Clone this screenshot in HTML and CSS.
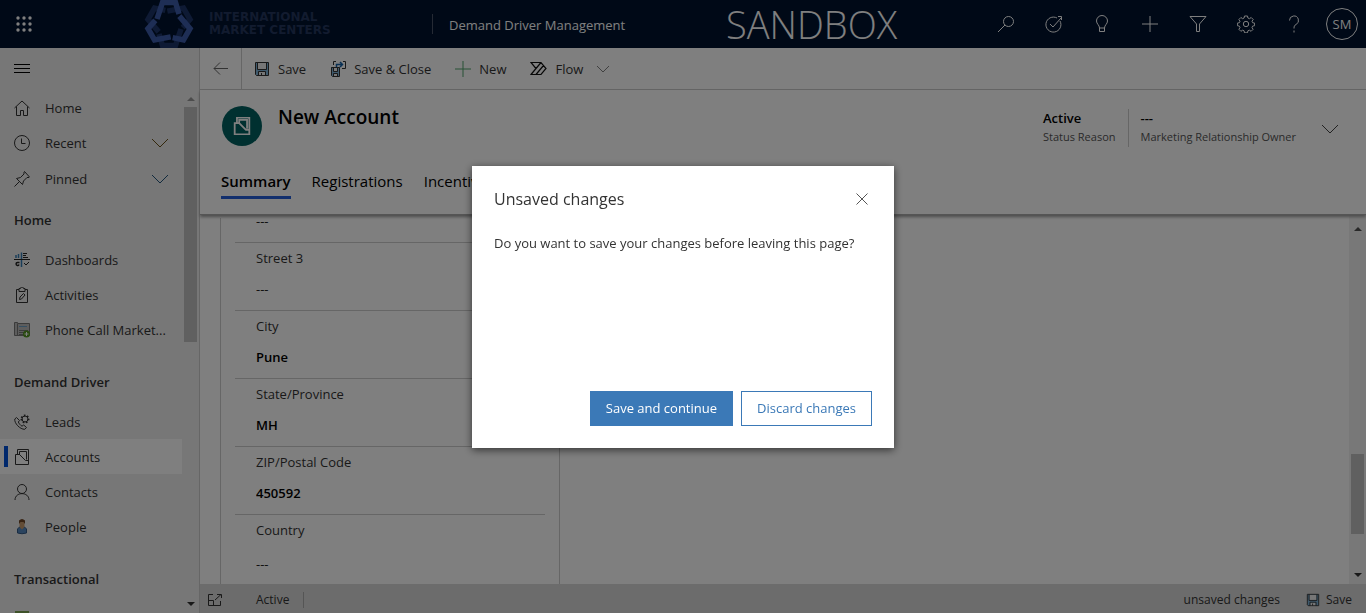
FILE: index.html
```html
<!DOCTYPE html>
<html lang="en">
<head>
<meta charset="utf-8">
<meta name="viewport" content="width=device-width, initial-scale=1">
<title>New Account - Demand Driver Management</title>
<link rel="stylesheet" href="styles.css">
</head>
<body>
<svg class="defs" aria-hidden="true">
  <symbol id="chevron" viewBox="0 0 16 16"><path d="M0 4l8 8 8-8"/></symbol>
  <symbol id="disk" viewBox="0 0 16 16"><path class="fill-blue" d="M1.500 1.500h13v13h-12l-1-1z"/><path class="fill-paper" d="M4 2h8v6H4zM5 11h6v4H5z"/><path d="M1.500 1.500h13v13h-12l-1-1zM3.500 1.500v7h9v-7M4.500 14.500v-4h7v4M7.500 12v2.500"/></symbol>
  <symbol id="account" viewBox="0 0 16 16"><path d="M3.500 5V.5h11v12M5.500 6V2.500h7v8M1.500 5.500h4l6 6h3v4h-13z"/></symbol>
  <symbol id="lobe" viewBox="-26 -26 52 52" overflow="visible"><path d="M-12-5L-6.500-21.500H6.500L10-11"/></symbol>
</svg>

<div class="app">
  <header class="topbar">
    <button class="waffle" aria-label="App launcher">
      <svg width="16" height="16" viewBox="0 0 16 16"><g fill="currentColor"><circle cx="2" cy="2" r="1.7"/><circle cx="8" cy="2" r="1.7"/><circle cx="14" cy="2" r="1.7"/><circle cx="2" cy="8" r="1.7"/><circle cx="8" cy="8" r="1.7"/><circle cx="14" cy="8" r="1.7"/><circle cx="2" cy="14" r="1.7"/><circle cx="8" cy="14" r="1.7"/><circle cx="14" cy="14" r="1.7"/></g></svg>
    </button>
    <a class="brand" href="#">
      <svg class="brand-mark" width="52" height="48" viewBox="-26 -24 52 48" fill="none" stroke-width="5.500">
        <g class="mark-dark">
          <path transform="rotate(60)" d="M-12-5L-6.500-20.500H6.500L10-10"/>
          <path transform="rotate(180)" d="M-12-5L-6.500-21.500H6.500L10-10"/>
          <path transform="rotate(300)" d="M-12-5L-6.500-20.500H6.500L10-10"/>
        </g>
        <g class="mark-light">
          <path d="M-12-5L-6.500-21.500H6.500L10-10"/>
          <path transform="rotate(120)" d="M-12-5L-6.500-20.500H6.500L10-10"/>
          <path transform="rotate(240)" d="M-12-5L-6.500-20.500H6.500L10-10"/>
        </g>
      </svg>
      <span class="brand-name">INTERNATIONAL<br>MARKET CENTERS</span>
    </a>
    <a class="app-name" href="#">Demand Driver Management</a>
    <div class="environment">SANDBOX</div>
    <nav class="tools" aria-label="Tools">
      <button aria-label="Search"><svg class="ico" width="18" height="18" viewBox="0 0 18 18"><circle cx="11.500" cy="6.500" r="5"/><path d="M8 10l-7 7"/></svg></button>
      <button aria-label="Assistant"><svg class="ico" width="18" height="18" viewBox="0 0 18 18"><path d="M12 3a7.500 7.500 0 1 0 3 3M5 9l3 3 8-9M13 1.500h3.500V5"/></svg></button>
      <button aria-label="Tips"><svg class="ico" width="18" height="18" viewBox="0 0 18 18"><path d="M6.500 13c0-3-3-4-3-7a5.500 5.500 0 0 1 11 0c0 3-3 4-3 7zM6.500 13v3.500h5V13"/></svg></button>
      <button aria-label="Add"><svg class="ico" width="18" height="18" viewBox="0 0 18 18"><path d="M9 1v16M1 9h16"/></svg></button>
      <button aria-label="Filter"><svg class="ico" width="18" height="18" viewBox="0 0 18 18"><path d="M1 1.500h16l-6.500 7.500v7.500h-3V9z"/></svg></button>
      <button aria-label="Settings"><svg class="ico" width="18" height="18" viewBox="0 0 18 18"><circle cx="9" cy="9" r="2.700"/><path d="M7.500 1h3l.4 2 1.600.7 1.700-1.200 2 2L15 6.200l.6 1.500 2 .4v2.600l-2 .4-.6 1.500 1.100 1.700-2 2-1.700-1.100-1.500.6-.4 2H7.500l-.4-2-1.500-.6-1.700 1.100-2-2L3 12.600l-.6-1.500-2-.4V8.100l2-.4L3 6.200 1.900 4.500l2-2 1.700 1.200 1.500-.7z"/></svg></button>
      <button aria-label="Help"><svg class="ico" width="18" height="18" viewBox="0 0 18 18"><path d="M4.500 5.500a4.500 4.500 0 1 1 6.500 4c-1.500.9-2 1.500-2 4M9 15.500V17.500"/></svg></button>
      <button class="me" aria-label="My account"><span class="avatar">SM</span></button>
    </nav>
  </header>

  <div class="shell">
    <aside class="side">
      <button class="menu-toggle" aria-label="Toggle menu"><svg class="ico" width="16" height="10" viewBox="0 0 16 10"><path d="M0 .5h16M0 4.500h16M0 8.500h16"/></svg></button>
      <div class="side-body">
        <nav class="nav" aria-label="Site map">
          <a class="nav-item" href="#"><svg class="ico" width="16" height="16" viewBox="0 0 16 16"><path d="M.5 8L8 1l7.500 7M2.500 6.500v9h4v-5h3v5h4v-9"/></svg><span>Home</span></a>
          <button class="nav-item"><svg class="ico" width="16" height="16" viewBox="0 0 16 16"><circle cx="8" cy="8" r="7.500"/><path d="M7.500 3.500v5h4"/></svg><span>Recent</span><svg class="ico chev gold" width="16" height="16"><use href="#chevron"/></svg></button>
          <button class="nav-item pinned"><svg class="ico" width="16" height="16" viewBox="0 0 16 16"><path d="M.5 15.500l5-5M2.500 7.500l6 6 1-3.500 3.500-3.500h2l.5-.5L10.500.5l-.5.500v2L6.500 6.500z"/></svg><span>Pinned</span><svg class="ico chev blue" width="16" height="16"><use href="#chevron"/></svg></button>

          <h2 class="nav-title">Home</h2>
          <a class="nav-item" href="#"><svg width="16" height="16" viewBox="0 0 16 16" fill="none" stroke="#222"><path stroke="#347db5" stroke-width="1.500" d="M2 3v3M4.500 2v4M7.500 .5V15"/><path d="M9 1.500h4M9 3.500h3M9 5.500h5M0 7.500h16M10 11l2 2 3-3"/><path stroke-width="1.500" d="M5.500 10.500H3.500a1.500 1.500 0 1 0 1.500 2"/></svg><span>Dashboards</span></a>
          <a class="nav-item" href="#"><svg class="ico" width="16" height="16" viewBox="0 0 16 16"><path d="M5 2.500H2.500v13h11v-13H11M5 4.500h6v-3H9.500a1.500 1.500 0 0 0-3 0H5zM5.500 12.500l.5-2.500 3.500-3.500 1.500 1.500-3.500 4z"/></svg><span>Activities</span></a>
          <a class="nav-item" href="#"><svg width="16" height="16" viewBox="0 0 16 16"><path fill="#bbb" stroke="#777" d="M.5.500h3v1h12v12H.5z"/><path stroke="#777" d="M3.500 2v12M5 8.500h9M5 10.500h5M5 12.500h5"/><path stroke="#6b9fc4" d="M5 4.500h8"/><circle cx="12.500" cy="12" r="3.500" fill="#539420"/><path stroke="#fff" d="M12.500 10v4M10.500 12h4"/></svg><span>Phone Call Market...</span></a>

          <h2 class="nav-title spaced">Demand Driver</h2>
          <a class="nav-item" href="#"><svg class="ico" width="16" height="16" viewBox="0 0 16 16"><path d="M2.500 3.500L.8 5c-.8 4 5.200 10.500 10 10.300l1.700-1.800-2.800-2.500-1.700 1.200C6.500 11.500 5 9.500 4.300 8l1.200-1.500z"/><circle cx="11" cy="5" r="3"/><path stroke-dasharray="1.500 1.640" d="M7.500 5a3.500 3.500 0 1 0 7 0a3.500 3.500 0 1 0-7 0" stroke-width="2"/></svg><span>Leads</span></a>
          <a class="nav-item current" href="#" aria-current="page"><svg class="ico" width="16" height="16"><use href="#account"/></svg><span>Accounts</span></a>
          <a class="nav-item" href="#"><svg class="ico" width="16" height="16" viewBox="0 0 16 16"><circle cx="8" cy="5" r="4.500"/><path d="M1 16c0-8.500 14-8.500 14 0"/></svg><span>Contacts</span></a>
          <a class="nav-item" href="#"><svg width="16" height="16" viewBox="0 0 16 16"><path fill="#5789bf" stroke="#355a86" d="M3.500 14V10l2-2h5l2 2v4q-4.500 1.500-9 0z"/><path fill="#c69a6c" d="M5.500 3h5v5L8 10.500 5.500 8z"/><path fill="#6f4726" d="M5 5V1.500q3-3 6 0V5l-1.500-2h-3z"/></svg><span>People</span></a>

          <h2 class="nav-title spaced">Transactional</h2>
          <a class="nav-item" href="#" aria-label="Orders"><svg width="16" height="16" viewBox="0 0 16 16"><path fill="#7da453" d="M1 0h14v15H1z"/></svg></a>
        </nav>
        <div class="scroll" aria-hidden="true"><i class="up soft"></i><i class="thumb side-thumb"></i><i class="down"></i></div>
      </div>
    </aside>

    <main class="main">
      <div class="commands">
        <button class="back" aria-label="Back"><svg class="ico" width="16" height="14" viewBox="0 0 16 14"><path d="M7 .5L1 6.500l6 6M1 6.500h14"/></svg></button>
        <button class="cmd"><svg class="ico" width="16" height="16"><use href="#disk"/></svg>Save</button>
        <button class="cmd"><svg class="ico" width="16" height="16" viewBox="0 0 16 16"><path class="fill-blue" d="M1 6h9v9H2l-1-1z"/><path class="fill-paper" d="M4 7h3v3H4zM4 13h3v2H4z"/><path d="M1.500 6.500h8v9h-7l-1-1zM3.500 6.500v4h4v-4M3.500 15.500v-3h4v3M3.500 4V.5H6M13 .5h2.500v7H12"/><path class="arrow" d="M6.500 6V3.500h6M10 1l2.500 2.500L10 6"/></svg>Save &amp; Close</button>
        <button class="cmd"><svg class="ico green" width="16" height="16" viewBox="0 0 16 16"><path d="M8 0v16M0 8h16"/></svg>New</button>
        <button class="cmd"><svg class="ico heavy" width="17" height="16" viewBox="0 0 17 16"><path d="M1 1.500h10l5 6-5 6H1l5-6zM1 13.500l10-12M6 13.500l7.500-9"/></svg>Flow<svg class="ico chev-small" width="12" height="12"><use href="#chevron"/></svg></button>
      </div>

      <section class="record">
        <div class="record-top">
          <div class="record-icon"><svg class="ico" width="18" height="18"><use href="#account"/></svg></div>
          <h1>New Account</h1>
          <dl class="facts">
            <div><dd>Active</dd><dt>Status Reason</dt></div>
            <div><dd>---</dd><dt>Marketing Relationship Owner</dt></div>
          </dl>
          <button class="expand" aria-label="More header fields"><svg class="ico" width="16" height="16"><use href="#chevron"/></svg></button>
        </div>
        <nav class="tabs" aria-label="Form tabs">
          <a class="active" href="#">Summary</a><a href="#">Registrations</a><a href="#">Incentives</a>
        </nav>
      </section>

      <div class="form-area">
        <form class="form">
          <div class="field first"><input aria-label="Street 2" value="---"></div>
          <div class="field"><label for="street3">Street 3</label><input id="street3" value="---"></div>
          <div class="field filled"><label for="city">City</label><input id="city" value="Pune"></div>
          <div class="field filled"><label for="state">State/Province</label><input id="state" value="MH"></div>
          <div class="field filled"><label for="zip">ZIP/Postal Code</label><input id="zip" value="450592"></div>
          <div class="field"><label for="country">Country</label><input id="country" value="---"></div>
        </form>
        <div class="scroll main-scroll" aria-hidden="true"><i class="up"></i><i class="thumb main-thumb"></i><i class="down"></i></div>
      </div>

      <footer class="status">
        <button class="popout" aria-label="Open in new window"><svg class="ico" width="14" height="12" viewBox="0 0 14 12"><path d="M5 .5H.5v11h12V7M.5 6.500h5v5M7 6l6-5.500M9 .5h4.500V4"/></svg></button>
        <span class="state">Active</span>
        <span class="dirty">unsaved changes</span>
        <button class="status-save"><svg class="ico" width="14" height="14"><use href="#disk"/></svg>Save</button>
      </footer>
    </main>
  </div>
</div>

<div class="overlay">
  <div class="dialog" role="dialog" aria-modal="true" aria-labelledby="dlg-title">
    <div class="dialog-head">
      <h2 id="dlg-title">Unsaved changes</h2>
      <button class="close" aria-label="Close"><svg class="ico" width="12" height="12" viewBox="0 0 12 12"><path d="M.5.500l11 11M11.500.500l-11 11"/></svg></button>
    </div>
    <p>Do you want to save your changes before leaving this page?</p>
    <div class="dialog-actions">
      <button class="primary">Save and continue</button>
      <button class="secondary">Discard changes</button>
    </div>
  </div>
</div>
</body>
</html>
```

FILE: styles.css
```css
* { box-sizing: border-box; }
body {
  margin: 0;
  font: 13px/20px "Open Sans", "Noto Sans", sans-serif;
  color: #333;
  background: #fff;
}
button, input { font: inherit; color: inherit; border: 0; padding: 0; background: none; }
a { color: inherit; text-decoration: none; }
h1, h2, p, dl, dd { margin: 0; }
.defs { position: absolute; width: 0; height: 0; }
svg { flex: none; }
.ico { fill: none; stroke: currentColor; stroke-width: 1; }
.fill-blue { fill: #7fb5da; stroke: none; }
.fill-paper { fill: #eee; stroke: none; }

.app { display: flex; flex-direction: column; height: 100vh; overflow: hidden; }

/* Top bar */
.topbar { display: flex; align-items: center; height: 48px; flex: none; background: #00122e; color: #fff; }
.waffle { display: grid; place-items: center; width: 48px; height: 48px; }
.brand { display: flex; align-items: center; gap: 14px; margin-left: 95px; width: 290px; height: 20px; border-right: 1px solid #4a5468; }
.mark-dark { stroke: #1c3468; }
.mark-light { stroke: #3d5cab; }
.brand-name { font: bold 12px/13px "DejaVu Sans", sans-serif; color: #24375e; white-space: nowrap; }
.app-name { margin-left: 16px; padding-top: 2px; font-size: 13px; white-space: nowrap; }
.environment { flex: 1; padding-left: 16px; text-align: center; font-size: 38px; font-weight: 300; line-height: 48px; }
.tools { display: flex; }
.tools button { display: grid; place-items: center; width: 48px; height: 48px; }
.avatar { display: grid; place-items: center; width: 32px; height: 32px; border: 1px solid #fff; border-radius: 50%; }

.shell { display: grid; grid-template-columns: 200px minmax(0, 1fr); flex: 1; min-height: 0; }

/* Sidebar */
.side { display: flex; flex-direction: column; min-height: 0; background: #efefef; border-right: 1px solid #ccc; }
.menu-toggle { display: flex; align-items: center; height: 42px; flex: none; padding-left: 14px; color: #000; }
.side-body { display: flex; flex: 1; min-height: 0; }
.nav { flex: 1; min-width: 0; overflow: hidden; }
.nav-item { display: flex; align-items: center; gap: 15px; width: 100%; height: 35px; padding: 0 14px; text-align: left; white-space: nowrap; }
.nav-item.pinned { height: 38px; }
.nav-item.current { background: linear-gradient(90deg, transparent 4px, #0050d8 4px, #0050d8 8px, transparent 8px) 0 7px / 100% 21px no-repeat, linear-gradient(#fff, #fff); }
.chev { margin-left: auto; }
.gold { color: #695018; }
.blue { color: #24567c; }
.nav-title { height: 44px; padding-left: 14px; font-size: 13px; font-weight: 600; line-height: 44px; }
.nav-title.spaced { margin-top: 13px; }

/* Scrollbars */
.scroll { display: flex; flex-direction: column; align-items: center; width: 17px; flex: none; background: #f1f1f1; }
.scroll i { display: block; }
.up, .down { border: 4px solid transparent; }
.up { margin-top: 3px; border-bottom-color: #505050; }
.up.soft { border-bottom-color: #999; }
.down { margin: auto 0 3px; border-top-color: #333; }
.thumb { width: 13px; background: #c1c1c1; }
.side .scroll { background: none; }
.side-thumb { height: 45%; margin-top: 6px; }
.main-scroll .up { margin-top: 8px; }
.main-thumb { height: 80px; margin-top: 223px; }

/* Main column */
.main { display: flex; flex-direction: column; min-width: 0; min-height: 0; }
.commands { display: flex; height: 42px; flex: none; border-bottom: 1px solid #ccc; }
.back { display: grid; place-items: center; width: 42px; border-right: 1px solid #ccc; color: #666; }
.cmd { display: flex; align-items: center; gap: 8px; padding: 0 12px; }
.green { color: #4fa36b; }
.heavy { color: #111; stroke-width: 1.2; }
.arrow { stroke: #1260a8; stroke-width: 1.5; }
.chev-small { margin-left: 6px; color: #555; }

.record { position: relative; flex: none; padding: 16px 28px 15px 21px; border-bottom: 1px solid #aaa; box-shadow: 0 2px 3px #999; }
.record-top { display: flex; align-items: flex-start; height: 60px; }
.record-icon { display: grid; place-items: center; width: 40px; height: 40px; margin-left: 1px; border-radius: 50%; background: #006060; color: #fff; }
.record-icon .ico { stroke-width: 1.6; }
.record h1 { margin-left: 16px; color: #000; font-size: 19px; font-weight: 600; line-height: 22px; }
.facts { display: flex; margin-left: auto; padding-top: 3px; }
.facts div { padding: 0 12px; }
.facts div + div { border-left: 1px solid #ccc; }
.facts dd { color: #000; font-weight: 600; line-height: 18px; }
.facts dt { color: #555; font-size: 11px; line-height: 20px; }
.expand { display: grid; width: 16px; height: 16px; margin: 15px 0 0 14px; color: #444; }
.tabs { display: flex; gap: 21px; color: #000; font-size: 15px; }
.tabs a { height: 33px; line-height: 31px; }
.tabs .active { font-weight: 600; border-bottom: 3px solid #245edb; }

.form-area { display: flex; flex: 1; min-height: 0; overflow: hidden; }
.form { width: 340px; height: 100%; margin: 3px auto 0 20px; padding: 0 14px; border: solid #ccc; border-width: 0 1px; }
.field { display: flex; flex-direction: column; height: 68px; padding: 4px 21px 0; border-bottom: 1px solid #ccc; }
.field.first { height: 25px; padding-top: 0; }
.field label { height: 22px; line-height: 22px; }
.field input { width: 100%; height: 20px; margin-top: 10px; line-height: 20px; color: #222; outline: 0; }
.field.first input { height: 10px; margin-top: -2px; }
.field.filled input { color: #000; font-weight: 600; }
.field:last-child { border: 0; }
.field:last-child input { margin-top: 13px; }

.status { display: flex; align-items: center; height: 29px; flex: none; padding: 2px 14px 0 8px; background: #d8d8d8; font-size: 12px; }
.popout { display: flex; width: 48px; }
.state { padding-right: 14px; border-right: 1px solid #aaa; line-height: 16px; }
.dirty { margin-left: auto; }
.status-save { display: flex; align-items: center; gap: 6px; margin-left: 26px; }
.status .fill-blue, .status .fill-paper { fill: none; }

/* Dialog */
.overlay { position: fixed; inset: 0; display: grid; place-items: center; background: rgba(0, 0, 0, .5); }
.dialog { display: flex; flex-direction: column; width: 422px; min-height: 282px; padding: 20px 22px 22px; background: #fff; box-shadow: 0 2px 8px rgba(0, 0, 0, .6); }
.dialog-head { display: flex; align-items: center; justify-content: space-between; }
.dialog-head h2 { font-size: 16px; font-weight: 400; line-height: 26px; }
.close { display: grid; padding: 4px; color: #555; }
.dialog p { margin-top: 21px; }
.dialog-actions { display: flex; justify-content: flex-end; gap: 8px; margin-top: auto; }
.dialog-actions button { height: 35px; padding: 0 15px; border: 1px solid #3b79b7; }
.primary { background: #3b79b7; color: #fff; font-weight: 500; }
.secondary { color: #3b79b7; }
```
